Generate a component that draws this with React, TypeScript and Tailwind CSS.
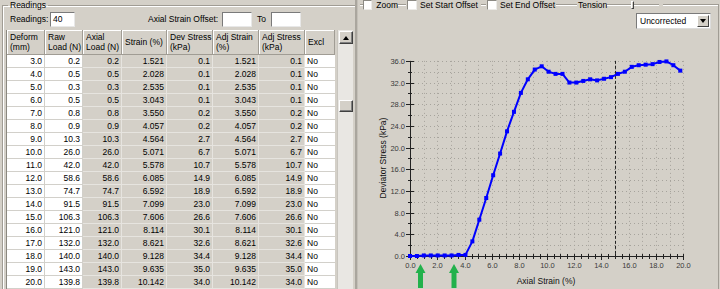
import React from "react";

const rows: string[][] = [
  ["3.0", "0.2", "0.2", "1.521", "0.1", "1.521", "0.1"],
  ["4.0", "0.5", "0.5", "2.028", "0.1", "2.028", "0.1"],
  ["5.0", "0.3", "0.3", "2.535", "0.1", "2.535", "0.1"],
  ["6.0", "0.5", "0.5", "3.043", "0.1", "3.043", "0.1"],
  ["7.0", "0.8", "0.8", "3.550", "0.2", "3.550", "0.2"],
  ["8.0", "0.9", "0.9", "4.057", "0.2", "4.057", "0.2"],
  ["9.0", "10.3", "10.3", "4.564", "2.7", "4.564", "2.7"],
  ["10.0", "26.0", "26.0", "5.071", "6.7", "5.071", "6.7"],
  ["11.0", "42.0", "42.0", "5.578", "10.7", "5.578", "10.7"],
  ["12.0", "58.6", "58.6", "6.085", "14.9", "6.085", "14.9"],
  ["13.0", "74.7", "74.7", "6.592", "18.9", "6.592", "18.9"],
  ["14.0", "91.5", "91.5", "7.099", "23.0", "7.099", "23.0"],
  ["15.0", "106.3", "106.3", "7.606", "26.6", "7.606", "26.6"],
  ["16.0", "121.0", "121.0", "8.114", "30.1", "8.114", "30.1"],
  ["17.0", "132.0", "132.0", "8.621", "32.6", "8.621", "32.6"],
  ["18.0", "140.0", "140.0", "9.128", "34.4", "9.128", "34.4"],
  ["19.0", "143.0", "143.0", "9.635", "35.0", "9.635", "35.0"],
  ["20.0", "139.8", "139.8", "10.142", "34.0", "10.142", "34.0"],
];

const headers: string[][] = [
  ["Deform", "(mm)"],
  ["Raw", "Load (N)"],
  ["Axial", "Load (N)"],
  ["Strain (%)"],
  ["Dev Stress", "(kPa)"],
  ["Adj Strain", "(%)"],
  ["Adj Stress", "(kPa)"],
  ["Excl"],
];

// dev stress per reading, strain step 0.507
const stress = [
  0.0, 0.0, 0.1, 0.1, 0.1, 0.1, 0.1, 0.2, 0.2, 2.7, 6.7, 10.7, 14.9, 18.9, 23.0, 26.6, 30.1, 32.6, 34.4, 35.0,
  34.0, 33.6, 33.6, 32.0, 32.0, 32.3, 32.6, 32.4, 32.7, 33.0, 33.6, 34.0, 34.9, 35.2, 35.3, 35.4, 35.8, 35.9, 35.2, 34.2,
];

const X = (s: number) => 410 + s * 13.67;
const Y = (v: number) => 256 - v * 5.42;
const px = (n: number) => Math.round(n) + 0.5;

const Checkbox = () => (
  <span className="block w-[10px] h-[10px] bg-white border border-[#8c8a84] border-r-[#ecebe8] border-b-[#ecebe8]" />
);

const Seg = ({ className }: { className: string }) => (
  <div className={`h-[2px] border-t border-[#a09c94] border-b border-b-white ${className}`} />
);

const Chart = () => {
  const pts = stress.map((v, i) => [X(i * 0.507), Y(v)]);
  return (
    <svg width={358} height={260} className="block">
      <g transform="translate(-360,-29)">
        {Array.from({ length: 20 }, (_, i) => (
          <line key={"v" + i} x1={px(X(i + 1))} x2={px(X(i + 1))} y1={Y(36)} y2={Y(0)} stroke="#a6a39c" strokeDasharray="1 3" />
        ))}
        {Array.from({ length: 18 }, (_, i) => (
          <line key={"h" + i} x1={X(0)} x2={X(20)} y1={px(Y((i + 1) * 2))} y2={px(Y((i + 1) * 2))} stroke="#a6a39c" strokeDasharray="1 3" />
        ))}

        <line x1={410.5} x2={410.5} y1={Y(36)} y2={Y(0)} stroke="#222" />
        {Array.from({ length: 19 }, (_, i) => {
          const v = i * 2;
          const y = px(Y(v));
          const major = v % 4 === 0;
          return (
            <g key={"yt" + i}>
              <line x1={major ? 406 : 408} x2={major ? 414 : 412} y1={y} y2={y} stroke="#222" />
              {major && (
                <text x={405} y={y + 2.5} textAnchor="end" fontSize={7.5} fill="#3a3a3a">
                  {v.toFixed(1)}
                </text>
              )}
            </g>
          );
        })}

        <line x1={410} x2={X(20)} y1={256.5} y2={256.5} stroke="#222" />
        {Array.from({ length: 41 }, (_, i) => {
          const s = i * 0.5;
          const x = px(X(s));
          const major = i % 4 === 0;
          return (
            <g key={"xt" + i}>
              <line x1={x} x2={x} y1={254} y2={major ? 260 : 259} stroke="#222" />
              {major && (
                <text x={x} y={268} textAnchor="middle" fontSize={7.5} fill="#3a3a3a">
                  {s.toFixed(1)}
                </text>
              )}
            </g>
          );
        })}

        <line x1={615.5} x2={615.5} y1={Y(36)} y2={Y(0)} stroke="#222" strokeDasharray="3 2" />

        <polyline points={pts.map((p) => p.join(",")).join(" ")} fill="none" stroke="#0000ff" strokeWidth={2} strokeLinejoin="round" />
        {pts.map(([x, y], i) => (
          <rect key={"p" + i} x={x - 2} y={y - 2} width={4} height={4} fill="#0000ff" />
        ))}

        <text x={386} y={158} textAnchor="middle" fontSize={8.5} fill="#111" transform="rotate(-90 386 158)">
          Deviator Stress (kPa)
        </text>
        <text x={546} y={284} textAnchor="middle" fontSize={8.5} fill="#111">
          Axial Strain (%)
        </text>

        {[420.5, 454].map((cx) => (
          <polygon
            key={cx}
            points={`${cx - 5},273 ${cx},264 ${cx + 5},273 ${cx + 2.5},273 ${cx + 2.5},288 ${cx - 2.5},288 ${cx - 2.5},273`}
            fill="#22b14c"
          />
        ))}
      </g>
    </svg>
  );
};

export default function App() {
  return (
    <div className="w-[720px] h-[289px] overflow-hidden bg-[#d4d0c8] flex font-['Liberation_Sans',Arial,sans-serif] text-[8.5px] text-black">
      {/* readings group */}
      <div className="w-[355px] shrink-0">
        <fieldset className="ml-[2px] w-[353px] h-[300px] min-w-0 border border-r-0 border-[#a09c94] shadow-[inset_1px_1px_0_#fff]">
          <legend className="ml-[5px] px-[2px] leading-[10px]">Readings</legend>
          <div className="flex items-center h-[15px] mt-[2px]">
            <span className="ml-[7px] w-[40px]">Readings:</span>
            <div className="w-[25px] h-[15px] bg-white border border-[#7a7a7a] border-r-[#e8e8e8] border-b-[#e8e8e8] pl-[2px] leading-[13px]">40</div>
            <span className="ml-[73px] w-[74px]">Axial Strain Offset:</span>
            <div className="w-[30px] h-[15px] bg-white border border-[#7a7a7a] border-r-[#e8e8e8] border-b-[#e8e8e8]" />
            <span className="ml-[5px] w-[14px]">To</span>
            <div className="w-[30px] h-[15px] bg-white border border-[#7a7a7a] border-r-[#e8e8e8] border-b-[#e8e8e8]" />
          </div>

          <div className="flex mt-[3px] pl-[3px]">
            <div className="border-l border-[#8a877f]">
              <div className="grid grid-cols-[38px_38px_39px_45px_46px_46px_46px_30px] h-[25px]">
                {headers.map((h, i) => (
                  <div
                    key={i}
                    className="flex flex-col justify-center pl-[3px] leading-[10px] bg-[#d4d0c8] border-r border-b border-[#a09c94] shadow-[inset_1px_1px_0_#fff]"
                  >
                    {h.map((t) => (
                      <span key={t} className="whitespace-nowrap">{t}</span>
                    ))}
                  </div>
                ))}
              </div>
              {rows.map((r, ri) => (
                <div key={ri} className="grid grid-cols-[38px_38px_39px_45px_46px_46px_46px_30px] h-[13px] leading-[12px]">
                  {r.map((c, ci) => (
                    <div
                      key={ci}
                      className={
                        ci < 2
                          ? "bg-white border-r border-b border-[#d2d0ca] text-right pr-[2px]"
                          : "bg-[#d4d0c8] border-r border-b border-[#e6e4df] text-right pr-[2px]"
                      }
                    >
                      {c}
                    </div>
                  ))}
                  <div className="bg-white border-b border-[#d2d0ca] pl-[2px]">No</div>
                </div>
              ))}
            </div>

            {/* scrollbar */}
            <div className="ml-[2px] w-[16px] h-[262px] bg-[#e9e7e3] border-l border-[#c8c5be] flex flex-col items-center">
              <div className="mt-[1px] w-[14px] h-[13px] bg-[#d4d0c8] border border-white border-r-[#404040] border-b-[#404040] shadow-[inset_-1px_-1px_0_#808080] flex items-center justify-center">
                <span className="w-0 h-0 border-l-[3px] border-r-[3px] border-b-[4px] border-l-transparent border-r-transparent border-b-black" />
              </div>
              <div className="mt-[56px] w-[14px] h-[12px] bg-[#d4d0c8] border border-white border-r-[#404040] border-b-[#404040] shadow-[inset_-1px_-1px_0_#808080]" />
            </div>
          </div>
        </fieldset>
      </div>

      {/* splitter */}
      <div className="w-[5px] shrink-0 flex">
        <div className="w-[2px] bg-[#aaa69e]" />
        <div className="w-[1px] bg-[#c4c0b8]" />
      </div>

      {/* chart group */}
      <div className="w-[360px] shrink-0 flex flex-col pr-[1px]">
        <div className="flex items-center h-[10px]">
          <Seg className="w-[3px]" />
          <label className="flex items-center w-[35px] bg-[#d4d0c8]">
            <Checkbox />
            <span className="ml-[4px]">Zoom</span>
          </label>
          <Seg className="w-[8px]" />
          <label className="flex items-center w-[75px] pl-[1px]">
            <Checkbox />
            <span className="ml-[3px] whitespace-nowrap">Set Start Offset</span>
          </label>
          <Seg className="w-[5px]" />
          <label className="flex items-center w-[70px] pl-[1px]">
            <Checkbox />
            <span className="ml-[3px] whitespace-nowrap">Set End Offset</span>
          </label>
          <Seg className="w-[21px]" />
          <span className="w-[30px] pl-[1px]">Tension</span>
          <Seg className="w-[4px]" />
          <div className="w-[48px] h-[10px] flex items-center">
            <div className="w-full h-[2px] border-t border-[#a09c94] border-b border-b-white flex items-center">
              <span className="ml-[20px] w-[3px] h-[8px] bg-[#d4d0c8] border border-white border-r-[#404040] border-b-[#404040]" />
            </div>
          </div>
          <div className="w-[4px]" />
          <div className="flex-1 self-stretch mt-[4px] border-t border-r border-[#a09c94] shadow-[inset_0_1px_0_#fff]" />
        </div>

        <div className="flex-1 flex flex-col border-r border-[#a09c94]">
          <div className="flex justify-end pr-[7px] mt-[3px]">
            <div className="flex w-[75px] h-[16px] bg-white border border-[#7a7a7a] border-r-[#dcdcdc] border-b-[#dcdcdc]">
              <span className="flex-1 pl-[3px] leading-[14px]">Uncorrected</span>
              <span className="w-[12px] m-[1px] bg-[#d4d0c8] border border-white border-r-[#404040] border-b-[#404040] flex items-center justify-center">
                <span className="w-0 h-0 border-l-[3px] border-r-[3px] border-t-[4px] border-l-transparent border-r-transparent border-t-black" />
              </span>
            </div>
          </div>
          <Chart />
        </div>
      </div>
    </div>
  );
}
